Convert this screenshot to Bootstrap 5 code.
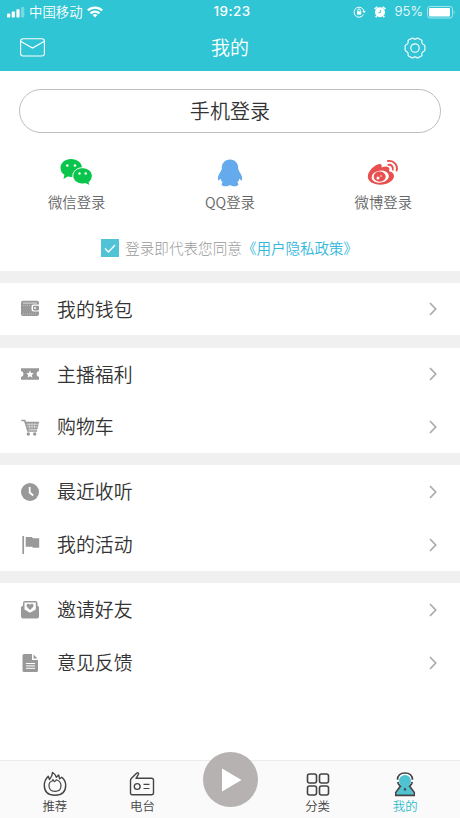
<!DOCTYPE html>
<html lang="zh-CN">
<head>
<meta charset="utf-8">
<meta name="viewport" content="width=device-width, initial-scale=1">
<title>我的</title>
<link rel="stylesheet" href="https://cdn.jsdelivr.net/npm/bootstrap@5.3.0/dist/css/bootstrap.min.css">
<style>
body{font-family:"Noto Sans CJK SC",sans-serif;font-weight:350;color:#333;height:818px;overflow:hidden;line-height:1}
svg{display:block;flex:none}
.app-head{background:#30c5d4;height:71px;color:#fff}
.status{height:24px;padding:0 5px 0 7px;font-size:13.4px}
.status>div{flex:1 1 0}
.latin{font-family:Inter,"Liberation Sans",sans-serif}
.clock{font-size:13.4px;font-weight:500;letter-spacing:.5px;padding-left:2px}
.title-bar{height:47px;padding:0 34px 0 20px}
.title-bar h1{font-size:19px;font-weight:350;line-height:1;padding:0 0 2px 11px}
.login{height:200px;padding:18px 0 0}
.phone-wrap{padding:0 19px}
.btn-phone{height:44px;border:1px solid #bfbfbf;font-size:20px;font-weight:350;line-height:1;color:#333;letter-spacing:.1px}
.social{margin-top:25px;font-size:14.4px;color:#666}
.social .col{height:60px}
.social svg{margin-bottom:8px}
.agree{font-size:14.6px;color:#999;font-weight:300;margin-top:20px;padding-right:1px;height:20px}
.agree a{color:#35b8dc;font-weight:350;letter-spacing:-.1px}
.tick{width:18px;height:18px;background:#51c3d6;margin-right:6px}
.gap-band{background:#f0f0f0;height:12px}
.menu-row{height:53px;padding:0 22px 0 20px;font-size:18.9px}
.menu-row .glyph{width:37px;color:#999}
.menu-short .menu-row{height:52.5px}
.wallet-sec .menu-row{height:52px}
.wallet-sec+.gap-band{height:13px}
.tabs{height:58px;background:#fafafa;border-top:1px solid #ececec;font-size:12.4px;color:#444}
.tabs .tab{width:87.6px;padding-top:9px}
.tabs .tab svg{margin-bottom:2px}
.tabs .active{color:#30bccb}
.play{width:55px;height:55px;background:#b5b2b1;margin-top:-9px}
</style>
<script src="https://cdn.jsdelivr.net/npm/bootstrap@5.3.0/dist/js/bootstrap.bundle.min.js"></script>
</head>
<body class="bg-white d-flex flex-column">
<svg width="0" height="0" class="d-none"><symbol id="chev" viewBox="0 0 10 16"><path d="M2 2l5.700 6L2 14" fill="none" stroke="#aaa" stroke-width="1.700"/></symbol></svg>
<header class="app-head">
  <div class="status d-flex align-items-center">
    <div class="d-flex align-items-center">
      <svg width="18" height="11" viewBox="0 0 18 11" fill="#fff"><rect y="6.500" width="3.200" height="4" rx=".8"/><rect x="4.700" y="4.500" width="3.200" height="6" rx=".8"/><rect x="9.400" y="2.200" width="3.200" height="8.300" rx=".8"/><rect x="14.100" width="3.200" height="10.500" rx=".8" opacity=".35"/></svg>
      <span class="ms-1">中国移动</span>
      <svg class="ms-1" width="16" height="12" viewBox="0 0 16 12" fill="none" stroke="#fff" stroke-width="2.200"><path d="M.8 4.500a10.300 10.300 0 0 1 14.400 0M3.500 7.400a6.400 6.400 0 0 1 9 0"/><path d="M8 11.500L5.600 9.100a3.500 3.500 0 0 1 4.800 0z" fill="#fff" stroke="none"/></svg>
    </div>
    <span class="latin clock">19:23</span>
    <div class="d-flex align-items-center justify-content-end">
      <svg width="13" height="12" viewBox="0 0 13 12" fill="none" stroke="#fff"><path d="M10.500 8.600A5 5 0 1 1 11 5.200"/><path d="M9.300 5h3.500L11 7.300z" fill="#fff" stroke="none"/><rect x="4" y="5.300" width="4.200" height="3.300" fill="#fff" stroke="none"/><path d="M4.800 5.500V4.300a1.300 1.300 0 0 1 2.600 0v1.200"/></svg>
      <svg class="ms-2" width="12" height="12" viewBox="0 0 12 12"><circle cx="6" cy="6.300" r="5" fill="#fff"/><path d="M.6 3L3.300.8M11.400 3L8.700.8M2.700 10l-1 1.300M9.300 10l1 1.300" stroke="#fff" stroke-width="1.600"/><path d="M6.300 3.800v2.900H4.300" fill="none" stroke="#30c5d4" stroke-width=".9"/></svg>
      <span class="latin ms-1 ps-1">95%</span>
      <svg class="ms-1" width="28" height="13" viewBox="0 0 28 13"><rect x=".5" y=".5" width="25" height="11.500" rx="2.500" fill="none" stroke="#fff" opacity=".55"/><rect x="2" y="2" width="21" height="8.500" rx="1" fill="#fff"/><path d="M26.700 4.200q1.800 2 0 4z" fill="#fff" opacity=".55"/></svg>
    </div>
  </div>
  <div class="title-bar d-flex align-items-center justify-content-between">
    <svg width="25" height="19" viewBox="0 0 25 19" fill="none" stroke="#fff" stroke-width="1.100"><rect x=".6" y=".8" width="23.800" height="17.200" rx="2.500"/><path d="M1 3.500l11.500 6.500L24 3.500"/></svg>
    <h1 class="m-0">我的</h1>
    <svg width="22" height="22" viewBox="0 0 22 22" fill="none" stroke="#fff" stroke-width="1.150" stroke-linejoin="round"><path d="M7.600 1.400Q8.200.7 9 1.300q2 1.500 4 0 .8-.6 1.400.1l3.100 1.700q.7.500.4 1.400-.5 2.200 2 3.300 1 .4 1 1.200v4q0 .8-1 1.200-2.500 1.100-2 3.300.3.900-.4 1.400l-3.100 1.700q-.6.700-1.400.1-2-1.500-4 0-.8.600-1.400-.1l-3.100-1.700q-.7-.5-.4-1.400.5-2.200-2-3.300-1-.4-1-1.200V9q0-.8 1-1.200 2.500-1.100 2-3.300-.3-.9.400-1.400z"/><circle cx="11" cy="11" r="4.200"/></svg>
  </div>
</header>
<main class="flex-grow-1">
  <section class="login">
    <div class="phone-wrap"><button class="btn btn-phone rounded-pill w-100 bg-white d-flex align-items-center justify-content-center">手机登录</button></div>
    <div class="social row g-0">
      <div class="col d-flex flex-column align-items-center">
        <svg width="33" height="29" viewBox="0 0 33 29"><path d="M11 1C5.100 1 .5 4.900.5 9.900c0 2.900 1.500 5.300 3.900 6.900L3.500 21l4.200-2.500c1.100.3 2.200.4 3.300.4 6 0 11-3.900 11-9S17 1 11 1z" fill="#09c54b"/><path d="M22.500 9.700c-5.300 0-9.700 3.600-9.700 8.100s4.400 8.200 9.700 8.200c1.100 0 2.100-.2 3.100-.4l4.300 2.100-.8-3.600c1.900-1.500 3.200-3.700 3.200-6.200 0-4.600-4.500-8.200-9.800-8.200z" fill="#09c54b" stroke="#fff" stroke-width="1"/><g fill="#fff"><circle cx="7.300" cy="7.500" r="1.300"/><circle cx="15" cy="7.500" r="1.300"/><circle cx="19.500" cy="15.500" r="1.200"/><circle cx="25.700" cy="15.500" r="1.200"/></g></svg>
        <span>微信登录</span>
      </div>
      <div class="col d-flex flex-column align-items-center">
        <svg width="26" height="29" viewBox="0 0 26 29" fill="#64aaed"><path d="M13 1.500c-5.300 0-8.500 4-8.200 9.200 0 1-.9 1.300-.9 2.600C1.600 16 .4 19.500 1 21.800c.3 1.300 1.500.3 2.600-1.300.3 1.600 1 2.900 2.200 4-1.700.8-1.800 3.400 1.400 3.700 2.300.2 4.500-.2 5.800-1.200 1.300 1 3.500 1.400 5.800 1.200 3.200-.3 3.100-2.900 1.400-3.700 1.200-1.100 1.900-2.400 2.200-4 1.100 1.600 2.300 2.600 2.600 1.300.6-2.300-.6-5.800-2.900-8.500 0-1.300-.9-1.600-.9-2.600.3-5.200-2.900-9.200-8.200-9.200z"/></svg>
        <span>QQ登录</span>
      </div>
      <div class="col d-flex flex-column align-items-center">
        <svg width="32" height="29" viewBox="0 0 32 29"><path d="M12.500 6c2-.3 2.700 1.200 2 3.600 3.600-1.500 7.900-1.700 7.900 1.700 0 .8-.3 1.300-.4 1.900 2.600.6 5 2 5 4.900 0 4.700-6.300 8.700-13.700 8.700C6.200 26.800.8 23.400.8 18.600.8 12.700 8 6.500 12.500 6z" fill="#e94f4f"/><ellipse cx="13.200" cy="18.700" rx="8.700" ry="6" fill="#fff" transform="rotate(-8 13 18.700)"/><ellipse cx="12.700" cy="18.700" rx="6" ry="5.100" fill="#e94f4f"/><circle cx="11" cy="20" r="1.500" fill="#fff"/><circle cx="14" cy="18" r=".8" fill="#fff"/><path d="M21 3a7.500 7.500 0 0 1 8.600 9.500M21.300 6.900a3.800 3.800 0 0 1 4.500 4.700" fill="none" stroke="#e94f4f" stroke-width="1.900" stroke-linecap="round"/></svg>
        <span>微博登录</span>
      </div>
    </div>
    <div class="agree d-flex align-items-center justify-content-center">
      <span class="tick d-flex align-items-center justify-content-center"><svg width="12" height="9" viewBox="0 0 12 9"><path d="M1 4.500L4.500 8 11 1" fill="none" stroke="#fff" stroke-width="1.300"/></svg></span>
      <span>登录即代表您同意</span><a href="#" class="text-decoration-none">《用户隐私政策》</a>
    </div>
  </section>
  <div class="gap-band"></div>
  <section class="wallet-sec">
    <div class="menu-row d-flex align-items-center">
      <span class="glyph"><svg width="20" height="18" viewBox="0 0 20 18"><path d="M1 2.800Q1 .8 3 .8h14q2 0 2 2V4.500h-5.500q-2 0-2 2v3q0 2 2 2H19v2.500q0 2-2 2H3q-2 0-2-2z" fill="#999"/><path d="M3 3.100h14" stroke="#e5e5e5" stroke-width=".9"/><path d="M3 5.500h8M3 14h13" stroke="#ccc" stroke-width=".7" stroke-dasharray="1 1"/><rect x="13" y="5.700" width="6" height="4.700" rx=".8" fill="#999"/><circle cx="15" cy="8" r="1" fill="#fff"/></svg></span>
      <span class="flex-grow-1">我的钱包</span><svg width="10" height="16"><use href="#chev"/></svg>
    </div>
  </section>
  <div class="gap-band"></div>
  <section class="menu-short">
    <div class="menu-row d-flex align-items-center">
      <span class="glyph"><svg width="20" height="18" viewBox="0 0 20 18"><path d="M1 3.300h18v2.600q-2.500.4-2.500 3.100t2.500 3.100v2.600H1v-2.600q2.500-.4 2.500-3.100T1 5.900z" fill="#999"/><path d="M10 5.500l1.100 2.500 2.700.2-2 1.800.6 2.700L10 11.300l-2.400 1.400.6-2.700-2-1.800L8.900 8z" fill="#fff"/></svg></span>
      <span class="flex-grow-1">主播福利</span><svg width="10" height="16"><use href="#chev"/></svg>
    </div>
    <div class="menu-row d-flex align-items-center">
      <span class="glyph"><svg width="20" height="18" viewBox="0 0 20 18" fill="none" stroke="#999" stroke-width="1.600"><path d="M1.300 2.500H4.700L8 13h9"/><path d="M4.800 3.800H19l-1.700 7.700H7.300z" fill="#999" stroke="none"/><path d="M6 6.300h12M6.700 8.900h10.700M9 5l.7 5.500M12 5v5.500M15 5l-.6 5.500" stroke="#eee" stroke-width=".6"/><circle cx="8.300" cy="16" r="1.700" fill="#999" stroke="none"/><circle cx="14.700" cy="16" r="1.700" fill="#999" stroke="none"/></svg></span>
      <span class="flex-grow-1">购物车</span><svg width="10" height="16"><use href="#chev"/></svg>
    </div>
  </section>
  <div class="gap-band"></div>
  <section>
    <div class="menu-row d-flex align-items-center">
      <span class="glyph"><svg width="20" height="20" viewBox="0 0 20 20"><circle cx="10" cy="10" r="9" fill="#999"/><path d="M9.700 5v5.500l3.500 3" fill="none" stroke="#fff" stroke-width="1.800"/></svg></span>
      <span class="flex-grow-1">最近收听</span><svg width="10" height="16"><use href="#chev"/></svg>
    </div>
    <div class="menu-row d-flex align-items-center">
      <span class="glyph"><svg width="20" height="20" viewBox="0 0 20 20"><path d="M3.200 1v18" stroke="#999" stroke-width="1.700"/><path d="M5.700 2H12l.8 1.300h6.400v9.500H13l-.8-1H5.700z" fill="#999"/></svg></span>
      <span class="flex-grow-1">我的活动</span><svg width="10" height="16"><use href="#chev"/></svg>
    </div>
  </section>
  <div class="gap-band"></div>
  <section>
    <div class="menu-row d-flex align-items-center">
      <span class="glyph"><svg width="20" height="20" viewBox="0 0 20 20"><path d="M1 7l2-1.500V3q0-2 2-2h10.500q2 0 2 2v2.500L19 7v9.500q0 2-2 2H3q-2 0-2-2z" fill="#999"/><path d="M4.500 2.500h11.300v7L10 12.700 4.500 9.500z" fill="#fff"/><path d="M10 10.100L7 7q-1.200-1.600.2-2.900Q8.900 3.300 10 4.800q1.200-1.500 2.900-.7 1.300 1.300.2 2.900z" fill="#999"/></svg></span>
      <span class="flex-grow-1">邀请好友</span><svg width="10" height="16"><use href="#chev"/></svg>
    </div>
    <div class="menu-row d-flex align-items-center">
      <span class="glyph"><svg width="20" height="20" viewBox="0 0 20 20"><path d="M4 1h8v6h6v10.500Q18 19 16.500 19H4q-1.500 0-1.500-1.500v-15Q2.500 1 4 1z" fill="#999"/><path d="M13.500 1.500L17.500 5.500h-4z" fill="#999"/><path d="M6 10.500h9M6 12.900h9M6 15.300h9" stroke="#fff" stroke-width="1"/></svg></span>
      <span class="flex-grow-1">意见反馈</span><svg width="10" height="16"><use href="#chev"/></svg>
    </div>
  </section>
</main>
<nav class="tabs d-flex justify-content-center">
  <div class="tab d-flex flex-column align-items-center">
    <svg width="26" height="28" viewBox="0 0 26 28" fill="none" stroke="#444" stroke-width="1.400" stroke-linejoin="round"><path d="M6.200 6.300L7.500 9.500Q10.300 6.500 10.500 2.500q3 1.600 3.900 4.700l2.200-2.200 1.100 3.700 2.100-1.500Q23.700 10.500 23.700 15.300q0 10-10.700 10T2.300 15.300q0-5 3.900-9z"/><path d="M11 9.500l1.300 2.200q1.500-.6 2-1.900 4.700 1.500 4.700 5.900 0 5.600-6 5.600t-6-5.600q0-3.900 3.200-4.700z" stroke-width="1.200"/></svg>
    <span>推荐</span>
  </div>
  <div class="tab d-flex flex-column align-items-center">
    <svg width="26" height="28" viewBox="0 0 26 28" fill="none" stroke="#444" stroke-width="1.400" stroke-linejoin="round"><path d="M7 8.300h15.500q2 0 2 2V22.700q0 2-2 2h-19q-2 0-2-2V10.500q0-1.300 1-2.200L7.800 3q1-.6 1.600.1.500.7-.1 1.400z"/><circle cx="8.200" cy="16.500" r="2.900"/><path d="M14.500 14.300h6M14.500 18.500h6" stroke-width="1.200"/></svg>
    <span>电台</span>
  </div>
  <div class="tab pt-0 d-flex justify-content-center">
    <div class="play rounded-circle d-flex align-items-center justify-content-center"><svg class="mb-0 ms-1" width="22" height="24" viewBox="0 0 22 24"><path d="M1 .500l19.500 11.500L1 23.500z" fill="#fff"/></svg></div>
  </div>
  <div class="tab d-flex flex-column align-items-center">
    <svg width="26" height="28" viewBox="0 0 26 28" fill="none" stroke="#444" stroke-width="1.600"><rect x="2.500" y="4" width="9" height="9" rx="2"/><rect x="14.500" y="4" width="9" height="9" rx="2"/><rect x="2.500" y="16" width="9" height="9" rx="2"/><rect x="14.500" y="16" width="9" height="9" rx="2"/></svg>
    <span>分类</span>
  </div>
  <div class="tab active d-flex flex-column align-items-center">
    <svg width="26" height="28" viewBox="0 0 26 28"><path d="M9 16L5 22.500V25h16v-2.500L17 16z" fill="#4fc3d2"/><path d="M5.500 9.800Q5.800 3 13 3t7.500 6.800M5.700 12q.6 2.700 2.800 4L3.800 22.500v2.900h18.400v-2.900L17.500 16q2.200-1.300 2.800-4" fill="none" stroke="#444" stroke-width="1.700"/><circle cx="13" cy="11" r="6" fill="#4fc3d2"/><path d="M13 17.500l1.300 1.700-1.300 2-1.300-2z" fill="#444"/></svg>
    <span>我的</span>
  </div>
</nav>
</body>
</html>
